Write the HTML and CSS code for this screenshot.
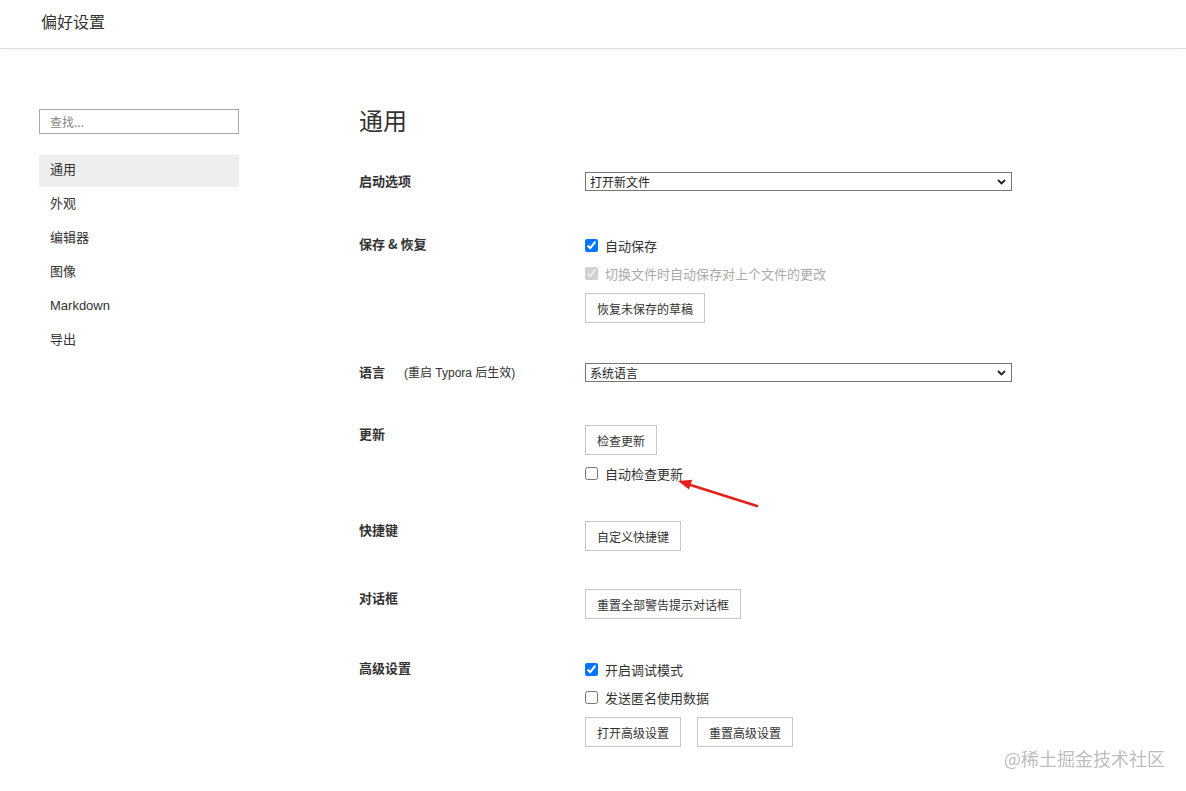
FILE: index.html
```html
<!DOCTYPE html>
<html lang="zh-CN">
<head>
  <meta charset="UTF-8">
  <meta name="viewport" content="width=device-width, initial-scale=1.0">
  <title>偏好设置</title>
  <link rel="stylesheet" href="styles.css">
</head>
<body>
  <div class="header">偏好设置</div>

  <div class="page">
    <!-- 左侧导航 -->
    <div class="sidebar">
      <input type="text" class="search" placeholder="查找...">
      <ul class="nav">
        <li class="active">通用</li>
        <li>外观</li>
        <li>编辑器</li>
        <li>图像</li>
        <li>Markdown</li>
        <li>导出</li>
      </ul>
    </div>

    <!-- 设置内容 -->
    <div class="main">
      <h1>通用</h1>

      <div class="section gap-lg">
        <div class="label">启动选项</div>
        <div class="controls">
          <div class="select-wrap">
            <select><option>打开新文件</option></select>
            <svg class="chevron" width="9" height="6" viewBox="0 0 9 6"><path d="M1 1l3.5 3.5L8 1" fill="none" stroke="#222" stroke-width="1.8"/></svg>
          </div>
        </div>
      </div>

      <div class="section">
        <div class="label">保存 &amp; 恢复</div>
        <div class="controls">
          <label class="check"><input type="checkbox" checked>自动保存</label>
          <label class="check disabled"><input type="checkbox" checked disabled>切换文件时自动保存对上个文件的更改</label>
          <div class="buttons"><button>恢复未保存的草稿</button></div>
        </div>
      </div>

      <div class="section gap-md">
        <div class="label">语言<span class="note">(重启 Typora 后生效)</span></div>
        <div class="controls">
          <div class="select-wrap">
            <select><option>系统语言</option></select>
            <svg class="chevron" width="9" height="6" viewBox="0 0 9 6"><path d="M1 1l3.5 3.5L8 1" fill="none" stroke="#222" stroke-width="1.8"/></svg>
          </div>
        </div>
      </div>

      <div class="section gap-sm">
        <div class="label">更新</div>
        <div class="controls">
          <div class="buttons first"><button>检查更新</button></div>
          <label class="check after-btn"><input type="checkbox">自动检查更新</label>
        </div>
      </div>

      <div class="section gap-sm">
        <div class="label">快捷键</div>
        <div class="controls">
          <div class="buttons first"><button>自定义快捷键</button></div>
        </div>
      </div>

      <div class="section">
        <div class="label">对话框</div>
        <div class="controls">
          <div class="buttons first"><button>重置全部警告提示对话框</button></div>
        </div>
      </div>

      <div class="section">
        <div class="label">高级设置</div>
        <div class="controls">
          <label class="check"><input type="checkbox" checked>开启调试模式</label>
          <label class="check"><input type="checkbox">发送匿名使用数据</label>
          <div class="buttons"><button>打开高级设置</button><button>重置高级设置</button></div>
        </div>
      </div>
    </div>
  </div>

  <!-- 标注箭头 -->
  <svg class="arrow" width="95" height="40" viewBox="0 0 95 40">
    <line x1="86" y1="34" x2="18" y2="12.4" stroke="#e3211c" stroke-width="2.6" stroke-linecap="round"/>
    <polygon points="7,9 21.2,7.8 18,17.6" fill="#e3211c"/>
  </svg>

  <div class="watermark">@稀土掘金技术社区</div>
</body>
</html>
```

FILE: styles.css
```css
body {
  margin: 0;
  font-family: "Noto Sans CJK SC", "Liberation Sans", sans-serif;
  color: #333;
  background-color: #fff;
}
.header {
  height: 48px;
  line-height: 42px;
  padding-left: 41px;
  font-size: 16px;
  color: #333;
  border-bottom: 1px solid #dedede;
  box-shadow: 0 2px 8px rgba(0, 0, 0, 0.04);
}
.page {
  display: flex;
  padding: 60px 0 0 39px;
}
.sidebar {
  width: 200px;
  flex-shrink: 0;
}
.search {
  display: block;
  width: 200px;
  height: 25px;
  box-sizing: border-box;
  border: 1px solid #a9a9a9;
  padding: 0 10px;
  font-size: 12px;
  font-family: inherit;
  outline: none;
}
.search::placeholder {
  color: #888;
}
.nav {
  list-style: none;
  margin: 21px 0 0;
  padding: 0;
}
.nav li {
  height: 32px;
  line-height: 30px;
  padding-left: 11px;
  margin-bottom: 2px;
  font-size: 13px;
  font-family: "Liberation Sans", "Noto Sans CJK SC", sans-serif;
  color: #333;
}
.nav li.active {
  background-color: #eeeeee;
}
.main {
  margin-left: 120px;
}
h1 {
  margin: -3px 0 38px;
  font-size: 24px;
  line-height: 28px;
  font-weight: normal;
  color: #333;
}
.section {
  display: flex;
  margin-bottom: 40px;
}
.section.gap-lg {
  margin-bottom: 43px;
}
.section.gap-md {
  margin-bottom: 42px;
}
.section.gap-sm {
  margin-bottom: 38px;
}
.label {
  width: 226px;
  height: 20px;
  flex-shrink: 0;
  font-size: 13px;
  line-height: 17px;
  font-weight: bold;
  color: #333;
}
.note {
  font-weight: normal;
  font-size: 12px;
  margin-left: 19px;
  font-family: "Liberation Sans", "Noto Sans CJK SC", sans-serif;
}
.controls {
  width: 427px;
}
.select-wrap {
  position: relative;
}
select {
  display: block;
  width: 427px;
  height: 19px;
  appearance: none;
  border: 1px solid #767676;
  border-radius: 0;
  background: #fff;
  padding: 0 4px;
  font-size: 12px;
  font-family: inherit;
  color: #222;
}
.chevron {
  position: absolute;
  right: 6px;
  top: 7px;
}
.check {
  display: flex;
  align-items: center;
  height: 20px;
  margin-bottom: 8px;
  font-size: 13px;
  color: #333;
}
.check input {
  width: 13px;
  height: 13px;
  margin: 0 7px 0 0;
}
.check.disabled {
  color: #aaa;
}
.check.after-btn {
  margin-top: 8px;
  margin-bottom: 0;
}
.buttons {
  display: flex;
  gap: 16px;
  margin-top: 10px;
}
.buttons.first {
  margin-top: 0;
}
button {
  height: 30px;
  padding: 0 11px;
  border: 1px solid #c6c6c6;
  background-color: #fff;
  font-size: 12px;
  font-family: inherit;
  color: #333;
  cursor: pointer;
}
.arrow {
  position: absolute;
  left: 671px;
  top: 472px;
}
.watermark {
  position: fixed;
  right: 21px;
  bottom: 21px;
  font-size: 18px;
  line-height: 24px;
  color: #bdbdbd;
}
```
